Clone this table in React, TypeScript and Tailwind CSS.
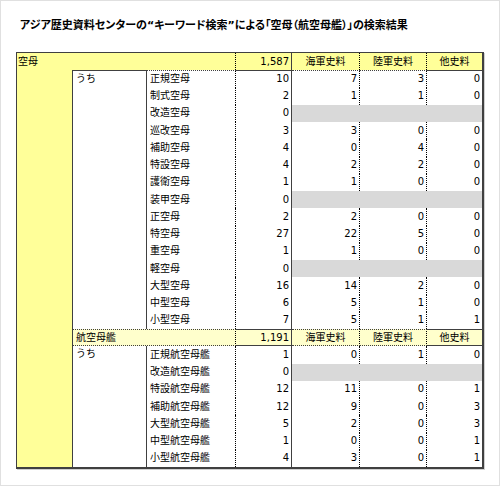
import React from "react";

type Row = { name: string; total: number; a?: number; b?: number; c?: number };

const carriers: Row[] = [
  { name: "正規空母", total: 10, a: 7, b: 3, c: 0 },
  { name: "制式空母", total: 2, a: 1, b: 1, c: 0 },
  { name: "改造空母", total: 0 },
  { name: "巡改空母", total: 3, a: 3, b: 0, c: 0 },
  { name: "補助空母", total: 4, a: 0, b: 4, c: 0 },
  { name: "特設空母", total: 4, a: 2, b: 2, c: 0 },
  { name: "護衛空母", total: 1, a: 1, b: 0, c: 0 },
  { name: "装甲空母", total: 0 },
  { name: "正空母", total: 2, a: 2, b: 0, c: 0 },
  { name: "特空母", total: 27, a: 22, b: 5, c: 0 },
  { name: "重空母", total: 1, a: 1, b: 0, c: 0 },
  { name: "軽空母", total: 0 },
  { name: "大型空母", total: 16, a: 14, b: 2, c: 0 },
  { name: "中型空母", total: 6, a: 5, b: 1, c: 0 },
  { name: "小型空母", total: 7, a: 5, b: 1, c: 1 },
];

const kokuRows: Row[] = [
  { name: "正規航空母艦", total: 1, a: 0, b: 1, c: 0 },
  { name: "改造航空母艦", total: 0 },
  { name: "特設航空母艦", total: 12, a: 11, b: 0, c: 1 },
  { name: "補助航空母艦", total: 12, a: 9, b: 0, c: 3 },
  { name: "大型航空母艦", total: 5, a: 2, b: 0, c: 3 },
  { name: "中型航空母艦", total: 1, a: 0, b: 0, c: 1 },
  { name: "小型航空母艦", total: 4, a: 3, b: 0, c: 1 },
];

function DataRow({ row, first }: { row: Row; first?: boolean }) {
  const top = first ? "border-t border-t-[#404040]" : "";
  return (
    <>
      <div className={`flex items-center pl-[3px] border-r border-dotted border-r-black ${top}`}>{row.name}</div>
      <div className={`flex items-center justify-end pr-[2px] border-r border-r-[#404040] ${top}`}>{row.total}</div>
      {row.a === undefined ? (
        <div className={`col-span-3 bg-[#d9d9d9] ${top}`} />
      ) : (
        <>
          <div className={`flex items-center justify-end pr-[2px] border-r border-dotted border-r-black ${top}`}>{row.a}</div>
          <div className={`flex items-center justify-end pr-[2px] border-r border-dotted border-r-black ${top}`}>{row.b}</div>
          <div className={`flex items-center justify-end pr-[2px] ${top}`}>{row.c}</div>
        </>
      )}
    </>
  );
}

function Sources({ bg, edge }: { bg: string; edge: string }) {
  return (
    <>
      <div className={`flex items-center justify-center border-r border-dotted border-r-black ${bg} ${edge}`}>海軍史料</div>
      <div className={`flex items-center justify-center border-r border-dotted border-r-black ${bg} ${edge}`}>陸軍史料</div>
      <div className={`flex items-center justify-center ${bg} ${edge}`}>他史料</div>
    </>
  );
}

export default function App() {
  return (
    <div className="w-[500px] h-[486px] bg-white border border-[#e0e0e0] text-black font-['DejaVu_Sans','Noto_Sans_CJK_JP',sans-serif]">
      <div className="pt-[17px] pl-[19px] text-[11px] leading-[16px] font-bold [font-feature-settings:'palt']">
        アジア歴史資料センターの“キーワード検索”による「空母（航空母艦）」の検索結果
      </div>
      <div className="mt-[18px] ml-[15px] w-[468px] border-l border-t border-r-2 border-b-2 border-[#404040] shadow-[1px_1px_0_#d0d0d0]">
        <div className="grid grid-cols-[56px_74px_89px_56px_68px_67px_55px] grid-rows-[repeat(24,17.25px)] text-[10px] leading-none">
          {/* 空母 header */}
          <div className="col-span-3 flex items-center pl-[1px] bg-[#ffff99] border-r border-dotted border-r-black">空母</div>
          <div className="flex items-center justify-end pr-[2px] bg-[#ffff99] border-r border-r-[#404040]">1,587</div>
          <Sources bg="bg-[#ffff99]" edge="" />

          {/* yellow side column */}
          <div className="row-span-23 bg-[#ffff99] border-r border-r-[#404040]" />
          <div className="row-span-15 pl-[3px] pt-[3px] border-r border-r-[#404040] border-t border-t-[#404040]">うち</div>
          {carriers.map((r, i) => (
            <DataRow key={r.name} row={r} first={i === 0} />
          ))}

          {/* 航空母艦 header */}
          <div className="col-span-2 flex items-center pl-[3px] bg-[#ffffcc] border-y border-y-[#404040] border-r border-dotted border-r-black">航空母艦</div>
          <div className="flex items-center justify-end pr-[2px] bg-[#ffffcc] border-y border-y-[#404040] border-r border-r-[#404040]">1,191</div>
          <Sources bg="bg-[#ffffcc]" edge="border-y border-y-[#404040]" />

          <div className="row-span-7 pl-[3px] pt-[3px] border-r border-r-[#404040]">うち</div>
          {kokuRows.map((r) => (
            <DataRow key={r.name} row={r} />
          ))}
        </div>
      </div>
    </div>
  );
}
